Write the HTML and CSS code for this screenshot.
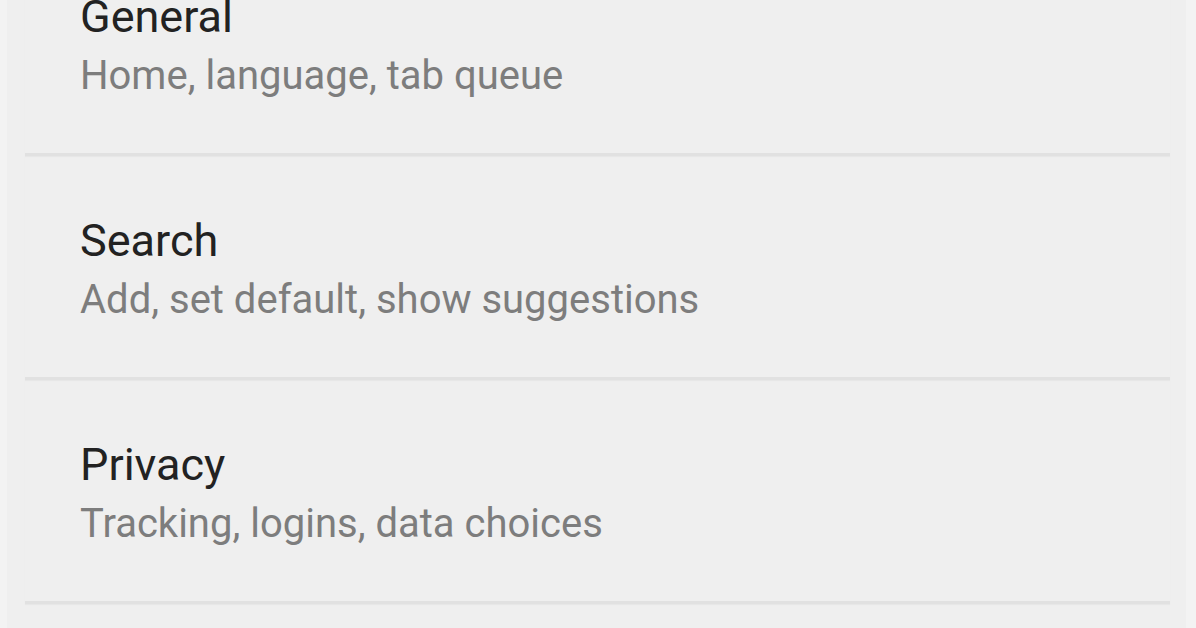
FILE: index.html
```html
<!DOCTYPE html>
<html><head><meta charset="utf-8"><title>Settings</title>
<link rel="stylesheet" href="styles.css"></head><body>
<div class="screen">
    <ul class="prefs">
        <li class="pref">
            <div class="pref-title">General</div>
            <div class="pref-summary">Home, language, tab queue</div>
        </li>
        <li class="pref">
            <div class="pref-title">Search</div>
            <div class="pref-summary">Add, set default, show suggestions</div>
        </li>
        <li class="pref">
            <div class="pref-title">Privacy</div>
            <div class="pref-summary">Tracking, logins, data choices</div>
        </li>
    </ul>
</div>
</body></html>
```

FILE: styles.css
```css
html, body {
    margin: 0;
    height: 100%;
    overflow: hidden;
    background: #efefef;
}

body {
    font-family: Roboto, "Noto Sans", Arial, sans-serif;
}

.screen {
    display: flow-root;
    height: 100%;
    border-left: 7px solid #f3f3f3;
    border-right: 10px solid #f3f3f3;
    box-sizing: border-box;
}

.prefs {
    list-style: none;
    margin: -68px 0 0;
    padding: 0;
}

.pref {
    margin: 0 16px 0 18px;
    padding: 57px 0 46px 55px;
    border-bottom: 3px solid #e1e1e1;
    box-shadow: 0 1px 1px rgba(0, 0, 0, 0.03);
}

.pref-title {
    font-size: 45px;
    line-height: 56px;
    color: #222;
}

.pref-summary {
    font-size: 40px;
    line-height: 62px;
    color: #7d7d7d;
}
```
